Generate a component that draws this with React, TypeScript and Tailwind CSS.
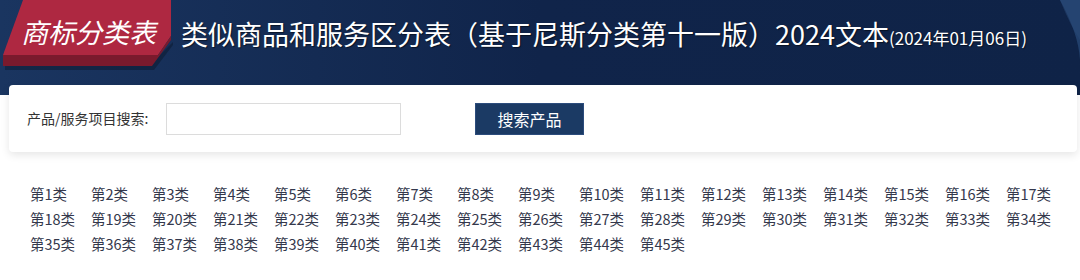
import React from "react";

const FONT = { fontFamily: '"Microsoft YaHei", "Noto Sans CJK SC", "Noto Sans", sans-serif' };

export default function App() {
  const cats = Array.from({ length: 45 }, (_, i) => i + 1);
  return (
    <div className="w-[1080px] h-[280px] bg-white overflow-hidden relative" style={FONT}>
      <header className="relative h-[95px] bg-gradient-to-r from-[#1a3560] via-[#10244a] to-[#0f2347] overflow-hidden">
        <svg className="absolute right-0 top-0" width="80" height="95" viewBox="0 0 80 95">
          <path d="M60,0 Q82,40 80,70 L80,0 Z" fill="#24426f" opacity="0.9" />
          <path d="M60,0 Q70,25 80,40 L80,0 Z" fill="#2a4a78" opacity="0.5" />
        </svg>
        <div className="relative flex items-start">
          <div className="relative w-[176px] h-[70px] shrink-0">
            <svg className="absolute left-0 top-0" width="176" height="70" viewBox="0 0 176 70">
              <polygon points="5,59 156,59 173,42 173,45 154,70 5,70" fill="#000" opacity="0.25" />
              <polygon points="23,0 171,0 171,36 158,55 3,55" fill="#ae2841" />
              <polygon points="3,55 158,55 171,36 171,40 152,66 3,66" fill="#7a1a2d" />
            </svg>
            <div className="absolute left-[21px] top-[12px] text-[27px] leading-[40px] text-white italic whitespace-nowrap">
              商标分类表
            </div>
          </div>
          <div className="ml-[5px] mt-[14px] leading-[40px] text-white whitespace-nowrap [text-shadow:1px_1px_1px_rgba(0,0,0,0.5)]">
            <span className="text-[27px]">类似商品和服务区分表（基于尼斯分类第十一版）2024文本</span>
            <span className="text-[17px]">(2024年01月06日)</span>
          </div>
        </div>
      </header>
      <div className="relative -mt-[10px] ml-[9px] w-[1068px] h-[67px] bg-white rounded-[4px] shadow-[0_3px_8px_rgba(0,0,0,0.1)] flex items-center pl-[18px]">
        <span className="text-[14px] text-[#333] w-[139px]">产品/服务项目搜索:</span>
        <div className="w-[235px] h-[32px] border border-[#dcdcdc] bg-white" />
        <button className="ml-[74px] w-[109px] h-[32px] bg-[#1b3a64] border border-[#2c4c7c] text-white text-[16px] leading-[30px]">
          搜索产品
        </button>
      </div>
      <div className="mt-[29px] pl-[30px] grid grid-cols-[repeat(17,61px)] leading-[25px] text-[14.5px] text-[#34384c]">
        {cats.map((n) => (
          <span key={n} className="whitespace-nowrap">第{n}类</span>
        ))}
      </div>
    </div>
  );
}
